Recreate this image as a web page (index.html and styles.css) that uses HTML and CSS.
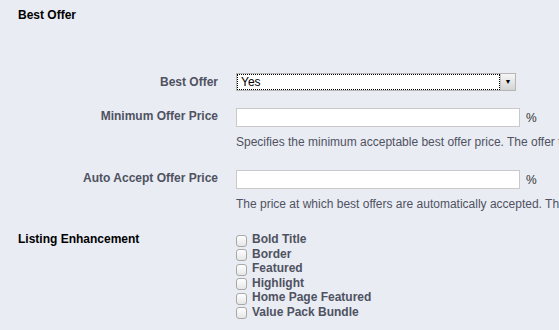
FILE: index.html
```html
<!DOCTYPE html>
<html lang="en">
<head>
  <meta charset="UTF-8">
  <title>Best Offer</title>
  <link rel="stylesheet" href="styles.css">
</head>
<body>
  <div class="section">
    <h3 class="section-title">Best Offer</h3>

    <div class="row row-first">
      <label class="label">Best Offer</label>
      <div class="field">
        <div class="select">
          <span class="select-value">Yes</span>
          <span class="select-btn">&#9660;</span>
        </div>
      </div>
    </div>

    <div class="row">
      <label class="label label-input">Minimum Offer Price</label>
      <div class="field">
        <div class="input-line"><input type="text" class="text-input"><span class="unit">%</span></div>
        <p class="help">Specifies the minimum acceptable best offer price. The offer that is below this price will be declined automatically.</p>
      </div>
    </div>

    <div class="row row-last">
      <label class="label label-input">Auto Accept Offer Price</label>
      <div class="field">
        <div class="input-line"><input type="text" class="text-input"><span class="unit">%</span></div>
        <p class="help">The price at which best offers are automatically accepted. The offer that is above this price will be accepted.</p>
      </div>
    </div>
  </div>

  <div class="row row-section">
    <h3 class="label label-section">Listing Enhancement</h3>
    <div class="field">
      <ul class="checks">
        <li><span class="box"></span>Bold Title</li>
        <li><span class="box"></span>Border</li>
        <li><span class="box"></span>Featured</li>
        <li><span class="box"></span>Highlight</li>
        <li><span class="box"></span>Home Page Featured</li>
        <li><span class="box"></span>Value Pack Bundle</li>
      </ul>
    </div>
  </div>
</body>
</html>
```

FILE: styles.css
```css
body {
  font-family: "Liberation Sans", Arial, sans-serif;
  font-size: 12px;
  background-color: #e9ecf3;
  color: #000;
  margin: 0;
  padding: 8px 0 0 18px;
  overflow: hidden;
  white-space: nowrap;
}
.section-title {
  font-size: 12px;
  font-weight: bold;
  margin: 0;
  line-height: 14px;
}
.row {
  display: grid;
  grid-template-columns: 200px 1fr;
  column-gap: 18px;
  margin-bottom: 21px;
}
.row-first {
  margin-top: 51px;
  margin-bottom: 17px;
}
.row-last {
  margin-bottom: 17px;
}
.label {
  text-align: right;
  font-weight: bold;
  color: #4f5261;
  line-height: 16px;
  padding-top: 1px;
}
.label-input {
  padding-top: 0;
}
.label-section {
  text-align: left;
  color: #000;
  font-size: 12px;
  margin: 0;
  padding-top: 3px;
}
.select {
  display: flex;
  width: 278px;
  height: 16px;
  border: 1px solid #b5b5b5;
  background: #fff;
}
.select-value {
  flex: 1;
  border: 1px dotted #000;
  padding-left: 3px;
  line-height: 14px;
  color: #000;
  font-size: 12px;
}
.select-btn {
  width: 14px;
  font-size: 7px;
  text-align: center;
  line-height: 16px;
  background: linear-gradient(#f6f6f6, #d4d4d4);
  border-left: 1px solid #c5c5c5;
}
.input-line {
  display: flex;
  align-items: center;
}
.text-input {
  width: 280px;
  height: 15px;
  border: 1px solid #c9c9c9;
  padding: 1px;
  margin: 0;
  background: #fff;
}
.unit {
  margin-left: 6px;
  color: #333;
}
.help {
  margin: 8px 0 0;
  color: #505262;
  line-height: 14px;
}
.row-section {
  margin-top: 0;
}
.checks {
  list-style: none;
  margin: 0;
  padding: 4px 0 0;
}
.checks li {
  display: flex;
  align-items: center;
  height: 14.5px;
  font-weight: bold;
  color: #4f5261;
}
.box {
  width: 9px;
  height: 10px;
  border: 1px solid #a8a8a8;
  border-radius: 3px;
  background: linear-gradient(#fff, #e6e6e6);
  margin-right: 5px;
  margin-top: 3px;
}
```
